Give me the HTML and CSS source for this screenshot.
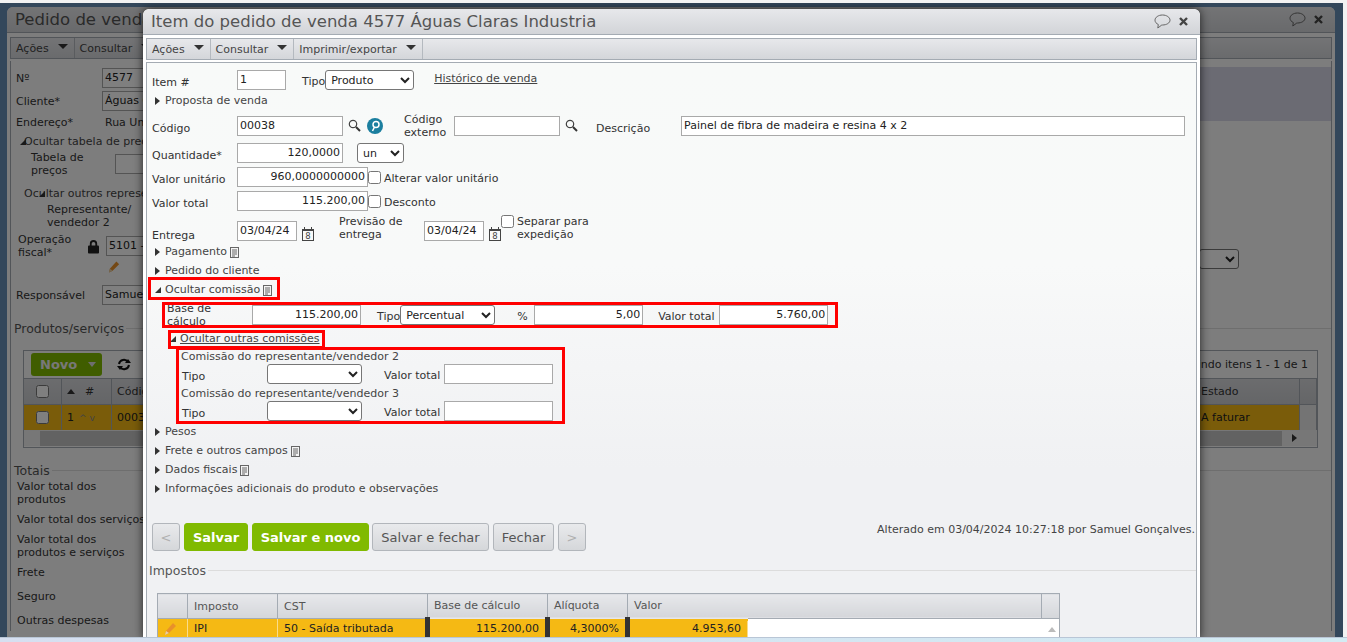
FILE: index.html
```html
<!DOCTYPE html>
<html lang="pt-BR">
<head>
  <meta charset="UTF-8">
  <title>Item do pedido de venda</title>
  <link rel="stylesheet" href="styles.css">
</head>
<body>
  <svg class="sprite" width="0" height="0">
    <symbol id="i-search" viewBox="0 0 13 13"><circle cx="5" cy="5" r="3.7" fill="none" stroke="#444" stroke-width="1.2"/><path d="M8 8l4 4" stroke="#333" stroke-width="2"/></symbol>
    <symbol id="i-doc" viewBox="0 0 9 11"><rect x=".5" y=".5" width="8" height="10" fill="#f4f4f4" stroke="#666"/><path d="M2 3h5M2 5h5M2 7h5M2 9h3" stroke="#666"/></symbol>
    <symbol id="i-cal" viewBox="0 0 12 14"><rect x=".5" y="2.5" width="11" height="11" fill="none" stroke="#444"/><path d="M2.5 0v3M9.5 0v3M.5 3.5h11" stroke="#444"/><text x="6" y="12" font-size="8.5" font-family="DejaVu Sans" text-anchor="middle" fill="#444">8</text></symbol>
    <symbol id="i-bubble" viewBox="0 0 17 15"><path d="M8.5 1C4.4 1 1 3.3 1 6.2c0 1.8 1.3 3.4 3.3 4.3L3.8 14l4-3h.7c4.1 0 7.5-2.1 7.5-4.8C16 3.3 12.6 1 8.5 1z" fill="none" stroke="#666"/></symbol>
    <symbol id="i-x" viewBox="0 0 9 9"><path d="M1 1l7 7M8 1l-7 7" stroke="#444" stroke-width="2.4"/></symbol>
    <symbol id="i-pencil" viewBox="0 0 14 14"><path d="M1 13l1-4 7-8 3 3-7 7z" fill="#e8912a"/><path d="M1 13l1-4 3 2z" fill="#e8d0a8"/></symbol>
    <symbol id="i-lock" viewBox="0 0 12 15"><path d="M3 7V4.500a3 3 0 0 1 6 0V7" fill="none" stroke="#222" stroke-width="2"/><rect x="0" y="6.500" width="12" height="8.500" rx="1" fill="#222"/></symbol>
    <symbol id="i-refresh" viewBox="0 0 14 13"><path d="M2 6a5 5 0 0 1 9-2M12 7a5 5 0 0 1-9 2" fill="none" stroke="#111" stroke-width="2"/><path d="M8 5h6l-3-4zM6 8H0l3 4z" fill="#111"/></symbol>
  </svg>

  <div class="desk">
    <div class="back">
      <div class="win-head">
        <span class="win-title">Pedido de venda</span>
        <svg class="bubble"><use href="#i-bubble"/></svg>
        <svg class="close"><use href="#i-x"/></svg>
      </div>
      <div class="toolbar back-toolbar">
        <span class="tool">Ações <i class="caret"></i></span>
        <span class="tool">Consultar <i class="caret"></i></span>
      </div>
      <div class="back-panel">
        <div class="back-top">
          <div class="back-form">
            <div class="brow brow-no"><span class="blbl">Nº</span><span class="binput">4577</span></div>
            <div class="brow brow-cli"><span class="blbl">Cliente*</span><span class="binput">Águas Claras Industria</span></div>
            <div class="brow brow-end"><span class="blbl">Endereço*</span><span class="btext">Rua Um</span></div>
            <div class="toggle open back-t1">Ocultar tabela de preços</div>
            <div class="brow brow-tab"><span class="blbl blbl-tab">Tabela de<br>preços</span><span class="binput empty"></span></div>
            <div class="toggle open back-t2">Ocultar outros representantes</div>
            <div class="brow brow-rep"><span class="blbl-rep">Representante/<br>vendedor 2</span></div>
            <div class="brow brow-op">
              <span class="blbl-op">Operação<br>fiscal*</span>
              <svg class="lock"><use href="#i-lock"/></svg>
              <span class="binput binput-op">5101 - Venda</span>
            </div>
            <svg class="back-pencil"><use href="#i-pencil"/></svg>
            <div class="brow brow-resp"><span class="blbl">Responsável</span><span class="binput">Samuel Gonçalves</span></div>
          </div>
          <div class="back-side">
            <div class="band"></div>
            <select class="side-select"><option></option></select>
          </div>
        </div>

        <div class="legend back-legend">Produtos/serviços</div>
        <div class="grid">
          <div class="grid-tools">
            <span class="novo">Novo<i class="novo-drop"></i></span>
            <svg class="refresh"><use href="#i-refresh"/></svg>
            <span class="showing">Exibindo itens 1 - 1 de 1</span>
          </div>
          <div class="grid-head">
            <span class="gcell"><input type="checkbox"></span>
            <span class="gcell"><i class="up"></i>#</span>
            <span class="gcell">Código</span>
            <span class="gcell">Estado</span>
            <span class="gcell"></span>
          </div>
          <div class="grid-row">
            <span class="gcell"><input type="checkbox"></span>
            <span class="gcell">1 <small>^ v</small></span>
            <span class="gcell">00038</span>
            <span class="gcell">A faturar</span>
            <span class="gcell gscroll"></span>
          </div>
          <div class="grid-foot"><span class="thumb"></span><i class="right"></i></div>
        </div>

        <div class="legend back-legend totals">Totais</div>
        <div class="tot tot-2">Valor total dos<br>produtos</div>
        <div class="tot tot-1">Valor total dos serviços</div>
        <div class="tot tot-2">Valor total dos<br>produtos e serviços</div>
        <div class="tot tot-1">Frete</div>
        <div class="tot tot-1">Seguro</div>
        <div class="tot tot-1">Outras despesas</div>
      </div>
    </div>

    <div class="overlay"></div>

    <div class="modal">
      <div class="win-head modal-head">
        <span class="win-title">Item do pedido de venda 4577 Águas Claras Industria</span>
        <svg class="bubble"><use href="#i-bubble"/></svg>
        <svg class="close"><use href="#i-x"/></svg>
      </div>
      <div class="toolbar">
        <span class="tool">Ações <i class="caret"></i></span>
        <span class="tool">Consultar <i class="caret"></i></span>
        <span class="tool">Imprimir/exportar <i class="caret"></i></span>
      </div>

      <div class="panel">
        <div class="row">
          <label class="lbl">Item #</label>
          <input class="w49" value="1">
          <label class="lbl-inline ml16">Tipo</label>
          <select class="w89"><option>Produto</option></select>
          <a class="link ml20">Histórico de venda</a>
        </div>
        <div class="toggle t-proposta">Proposta de venda</div>

        <div class="row row-codigo">
          <label class="lbl">Código</label>
          <input class="w106" value="00038">
          <svg class="search ml5"><use href="#i-search"/></svg>
          <span class="lookup"><svg viewBox="0 0 16 16"><circle cx="9" cy="6.500" r="3" fill="none" stroke="#fff" stroke-width="1.500"/><path d="M7.500 9l-2 4" stroke="#fff" stroke-width="1.500"/></svg></span>
          <label class="two-line w50 ml21">Código<br>externo</label>
          <input class="w106" value="">
          <svg class="search ml5"><use href="#i-search"/></svg>
          <label class="lbl-desc ml18">Descrição</label>
          <input class="w504" value="Painel de fibra de madeira e resina 4 x 2">
        </div>

        <div class="stack">
          <div class="row">
            <label class="lbl">Quantidade*</label>
            <input class="w106 num" value="120,0000">
            <select class="w47 ml14"><option>un</option></select>
          </div>
          <div class="row">
            <label class="lbl">Valor unitário</label>
            <input class="w131 num" value="960,0000000000">
            <input type="checkbox" class="ml23">
            <label class="check-label">Alterar valor unitário</label>
          </div>
          <div class="row">
            <label class="lbl">Valor total</label>
            <input class="w131 num ro" value="115.200,00" readonly>
            <input type="checkbox" class="ml23">
            <label class="check-label">Desconto</label>
          </div>
        </div>

        <div class="row row-entrega">
          <label class="lbl lbl-entrega">Entrega</label>
          <input class="w60 date" value="03/04/24">
          <svg class="cal ml5"><use href="#i-cal"/></svg>
          <label class="two-line w85 ml25">Previsão de<br>entrega</label>
          <input class="w60 date" value="03/04/24">
          <svg class="cal ml5"><use href="#i-cal"/></svg>
          <input type="checkbox" class="ml26 check-top">
          <label class="two-line check-label">Separar para<br>expedição</label>
        </div>

        <div class="toggle">Pagamento <svg class="doc"><use href="#i-doc"/></svg></div>
        <div class="toggle">Pedido do cliente</div>
        <div class="toggle open">Ocultar comissão <svg class="doc"><use href="#i-doc"/></svg></div>

        <div class="row row-base">
          <label class="two-line w85">Base de<br>cálculo</label>
          <input class="w109 num ro" value="115.200,00" readonly>
          <label class="lbl-inline ml16">Tipo</label>
          <select class="w95"><option>Percentual</option></select>
          <label class="lbl-inline w17 ml22">%</label>
          <input class="w109 num" value="5,00">
          <label class="lbl-inline w61 ml15">Valor total</label>
          <input class="w109 num" value="5.760,00">
        </div>

        <div class="toggle open sub"><a class="link">Ocultar outras comissões</a></div>

        <div class="rep-title rep-first">Comissão do representante/vendedor 2</div>
        <div class="row row-rep">
          <label class="lbl">Tipo</label>
          <select class="w95"><option></option></select>
          <label class="lbl-inline w60 ml22">Valor total</label>
          <input class="w109">
        </div>
        <div class="rep-title">Comissão do representante/vendedor 3</div>
        <div class="row row-rep">
          <label class="lbl">Tipo</label>
          <select class="w95"><option></option></select>
          <label class="lbl-inline w60 ml22">Valor total</label>
          <input class="w109">
        </div>

        <div class="toggle t-pesos">Pesos</div>
        <div class="toggle">Frete e outros campos <svg class="doc"><use href="#i-doc"/></svg></div>
        <div class="toggle">Dados fiscais <svg class="doc"><use href="#i-doc"/></svg></div>
        <div class="toggle">Informações adicionais do produto e observações</div>

        <div class="actions">
          <button class="btn nav" disabled>&lt;</button>
          <button class="btn green save">Salvar</button>
          <button class="btn green save-new">Salvar e novo</button>
          <button class="btn save-close">Salvar e fechar</button>
          <button class="btn close-btn">Fechar</button>
          <button class="btn nav" disabled>&gt;</button>
          <span class="changed">Alterado em 03/04/2024 10:27:18 por Samuel Gonçalves.</span>
        </div>

        <div class="legend">Impostos</div>
        <table class="taxes">
          <colgroup>
            <col class="c-edit"><col class="c-imp"><col class="c-cst"><col class="c-base"><col class="c-aliq"><col class="c-val"><col class="c-rest"><col class="c-scroll">
          </colgroup>
          <thead>
            <tr><th></th><th>Imposto</th><th>CST</th><th>Base de cálculo</th><th>Alíquota</th><th colspan="2">Valor</th><th></th></tr>
          </thead>
          <tbody>
            <tr class="sel">
              <td><svg class="edit"><use href="#i-pencil"/></svg></td>
              <td>IPI</td>
              <td>50 - Saída tributada</td>
              <td class="right">115.200,00</td>
              <td class="right">4,3000%</td>
              <td class="right">4.953,60</td>
              <td class="blank"></td>
              <td class="blank"><i class="up up-grey"></i></td>
            </tr>
          </tbody>
        </table>
      </div>

      <span class="mark mark-1"></span>
      <span class="mark mark-2"></span>
      <span class="mark mark-3"></span>
      <span class="mark mark-4"></span>
    </div>
  </div>
  <div class="strip"></div>
</body>
</html>
```
FILE: styles.css
```css
* {
  box-sizing: border-box;
}

html, body {
  margin: 0;
  height: 642px;
  overflow: hidden;
}

body {
  background: #f2f2f2;
  font-family: "DejaVu Sans", Verdana, sans-serif;
  font-size: 11px;
  color: #333;
  padding-top: 3px;
  border-top: 0;
}

.sprite {
  display: block;
  position: absolute;
}

.desk {
  position: relative;
  width: 1343px;
  height: 634px;
  overflow: hidden;
  background: #668eb6;
  padding: 4px 8px 0 7px;
}

.overlay {
  position: absolute;
  inset: 0;
  background: rgba(0, 0, 0, 0.5);
}

.strip {
  height: 5px;
  background: linear-gradient(90deg, #d6dff0, #d3ebf3);
  border-top: 1px solid #b9c6d6;
}

/* window chrome */
.win-head {
  display: flex;
  align-items: center;
  height: 26px;
  padding: 0 12px 0 8px;
  background: linear-gradient(#e7e8eb, #d2d4d8);
  border-bottom: 1px solid #a4abb3;
  border-radius: 6px 6px 0 0;
}

.win-title {
  flex: 1;
  font-size: 16.500px;
  color: #555;
  white-space: nowrap;
}

.bubble {
  width: 17px;
  height: 15px;
  margin-right: 8px;
}

.close {
  width: 9px;
  height: 9px;
}

.toolbar {
  display: flex;
  height: 22px;
  margin: 3px 3px 2px;
  background: linear-gradient(#e7e8eb, #d4d6da);
  border: 1px solid #a4abb3;
}

.tool {
  display: flex;
  align-items: center;
  gap: 6px;
  padding: 0 5px 0 5px;
  border-right: 1px solid #b4b9bf;
  color: #444;
  font-size: 11px;
}

.caret {
  width: 0;
  height: 0;
  margin: 0 1px 3px 3px;
  border-left: 5px solid transparent;
  border-right: 5px solid transparent;
  border-top: 5px solid #333;
}

/* background window */
.back {
  height: 630px;
  background: #fbfbfb;
  border-radius: 6px 6px 0 0;
}

.back .win-title {
  font-size: 16.500px;
}

.back-toolbar {
  margin: 4px 3px 2px;
}

.back-panel {
  margin: 0 3px;
  padding: 6px 0 0;
  border-left: 1px solid #a4abb3;
  border-right: 1px solid #a4abb3;
  height: 570px;
}

.back-top {
  display: flex;
  justify-content: space-between;
  height: 254px;
}

.back-form {
  width: 400px;
}

.brow {
  display: flex;
  align-items: center;
  padding-left: 5px;
  white-space: nowrap;
}

.blbl {
  width: 86px;
}

.binput {
  display: block;
  width: 300px;
  height: 20px;
  padding: 2px;
  background: #fff;
  border: 1px solid #a9a9a9;
  color: #222;
}

.binput.empty {
  margin-left: -1px;
}

.btext {
  padding-left: 3px;
}

.brow-no { height: 22px; margin-top: 0; }
.brow-cli { height: 20px; margin-top: 2px; }
.brow-end { height: 20px; margin-top: 1px; }

.back-t1 {
  margin-top: 0;
  padding-left: 19px;
}

.back-t2 {
  padding-left: 34px;
  margin-top: 7px;
}

.brow-tab {
  height: 26px;
  margin-top: 0;
  padding-left: 20px;
}

.blbl-tab {
  width: 86px;
  line-height: 13px;
}

.blbl-rep {
  padding-left: 31px;
  line-height: 13px;
}

.brow-rep {
  height: 26px;
  margin-top: 0;
}

.brow-op {
  height: 26px;
  margin-top: 4px;
  padding-left: 7px;
}

.blbl-op {
  width: 70px;
  line-height: 13px;
}

.lock {
  width: 11px;
  height: 15px;
  margin-right: 7px;
}

.back-pencil {
  display: block;
  width: 13px;
  height: 14px;
  margin: 1px 0 0 97px;
}

.brow-resp {
  height: 18px;
  margin-top: 12px;
}

.back-side {
  width: 132px;
  display: flex;
  flex-direction: column;
}

.band {
  height: 54px;
  background: #d6d6e6;
}

.side-select {
  align-self: flex-start;
  width: 40px;
  margin-top: 128px;
}

.legend {
  display: flex;
  align-items: center;
  gap: 2px;
  height: 14px;
  margin: 12px 0 0 -3px;
  font-size: 12.500px;
  color: #555;
  white-space: nowrap;
}

.legend::after {
  content: "";
  flex: 1;
  height: 1px;
  background: #dcdcdc;
}

.back-legend {
  margin: 0 0 0 3px;
}

.grid {
  margin: 15px 13px 0 12px;
  border: 1px solid #a4abb3;
  height: 98px;
}

.grid-tools {
  display: flex;
  align-items: center;
  height: 27px;
  padding: 0 7px;
}

.novo {
  display: flex;
  align-items: center;
  justify-content: space-between;
  width: 71px;
  height: 23px;
  padding-left: 9px;
  background: #80ba00;
  border-radius: 3px;
  color: #f0f0f0;
  font-weight: bold;
  font-size: 13px;
}

.novo-drop {
  width: 0;
  height: 0;
  margin-right: 6px;
  border-left: 4px solid transparent;
  border-right: 4px solid transparent;
  border-top: 5px solid #ddd;
}

.refresh {
  width: 14px;
  height: 13px;
  margin-left: 15px;
}

.showing {
  margin-left: auto;
  padding-right: 2px;
}

.grid-head,
.grid-row {
  display: grid;
  grid-template-columns: 38px 50px 1fr 104px 17px;
  align-items: stretch;
}

.grid-head {
  height: 26px;
  background: linear-gradient(#d8d9dc, #c9cbcf);
  border-top: 1px solid #a4abb3;
}

.grid-row {
  height: 26px;
  background: #f5b914;
  border-top: 1px solid #a4abb3;
  color: #222;
}

.gcell {
  display: flex;
  align-items: center;
  gap: 5px;
  padding-left: 5px;
  border-right: 1px solid #a4abb3;
  white-space: nowrap;
  overflow: hidden;
}

.gcell small {
  color: #888;
}

.gscroll {
  background: #e8e8e8;
}

.grid input[type="checkbox"] {
  margin: 0 0 0 7px;
}

.grid-foot {
  display: flex;
  align-items: center;
  height: 16px;
  padding-left: 16px;
  background: #efefef;
}

.thumb {
  flex: 1;
  height: 15px;
  background: #c4c4c4;
}

.right {
  width: 0;
  height: 0;
  margin: 0 20px 0 10px;
  border-top: 4px solid transparent;
  border-bottom: 4px solid transparent;
  border-left: 5px solid #333;
}

.totals {
  margin-top: 15px;
}

.tot {
  padding-left: 6px;
  line-height: 13px;
  white-space: nowrap;
}

.tot-2 { margin-top: 3px; height: 26px; }
.tot-1 { margin-top: 7px; height: 17px; }

/* modal */
.modal {
  position: absolute;
  left: 143px;
  top: 6px;
  width: 1057px;
  height: 630px;
  overflow: hidden;
  background: #fff;
  border-radius: 6px 6px 0 0;
  box-shadow: 0 0 10px rgba(0, 0, 0, 0.7);
}

.panel {
  height: 580px;
  margin: 0 3px;
  padding: 7px 0 0 5px;
  background: linear-gradient(#f8faf9, #f8f9f9 35%, #f0f1f3 70%);
  border: 1px solid #a4abb3;
  border-bottom: 0;
  overflow: hidden;
}

.row {
  display: flex;
  align-items: center;
  height: 20px;
  white-space: nowrap;
}

.lbl {
  width: 85px;
  padding-top: 4px;
}

.lbl-inline {
  padding-top: 3px;
}

.lbl-desc {
  width: 85px;
  padding-top: 4px;
}

.two-line {
  line-height: 13px;
}

.check-label {
  margin-left: 3px;
  padding-top: 2px;
}

.link {
  color: #444;
  text-decoration: underline;
}

.row > .link {
  margin-bottom: 3px;
}

input:not([type="checkbox"]),
select {
  height: 20px;
  padding: 0 2px 2px;
  background: #fff;
  border: 1px solid #a9a9a9;
  border-radius: 0;
  font: 11px "DejaVu Sans", Verdana, sans-serif;
  color: #222;
  outline: none;
}

select {
  padding: 0 0 0 1px;
  border-color: #767676;
  border-radius: 3px;
}

input[type="checkbox"] {
  width: 13px;
  height: 13px;
  margin: 0;
  flex: none;
}

.num {
  text-align: right;
}

.ro {
  color: #777;
}

.w17 { width: 17px; }
.w47 { width: 47px; }
.w49 { width: 49px; }
.w50 { width: 50px; }
.w60 { width: 60px; }
.w61 { width: 61px; }
.w85 { width: 85px; }
.w89 { width: 89px; }
.w95 { width: 95px; }
.w106 { width: 106px; }
.w109 { width: 109px; }
.w131 { width: 131px; }
.w504 { width: 504px; }

.ml5 { margin-left: 5px; }
.ml14 { margin-left: 14px; }
.ml15 { margin-left: 15px; }
.ml16 { margin-left: 16px; }
.ml18 { margin-left: 18px; }
.ml20 { margin-left: 20px; }
.ml21 { margin-left: 21px; }
.ml22 { margin-left: 22px; }
.ml23 { margin-left: 23px; }
.ml25 { margin-left: 25px; }
.ml26 { margin-left: 26px; }

.ml14, .ml16 { flex: none; }

.search {
  width: 13px;
  height: 13px;
  flex: none;
  margin-bottom: 2px;
}

.lookup {
  flex: none;
  width: 16px;
  height: 16px;
  margin-left: 6px;
  border-radius: 50%;
  background: #1b7f9f;
}

.lookup svg {
  display: block;
}

.cal {
  width: 12px;
  height: 14px;
  flex: none;
}

.doc {
  width: 9px;
  height: 11px;
  margin: 2px 0 0 3px;
}

.toggle {
  position: relative;
  display: flex;
  align-items: center;
  height: 19px;
  padding-left: 13px;
  color: #444;
  white-space: nowrap;
}

.toggle::before {
  content: "";
  position: absolute;
  left: 3px;
  top: 6px;
  border-top: 4px solid transparent;
  border-bottom: 4px solid transparent;
  border-left: 5px solid #333;
}

.toggle.open::before {
  top: 7px;
  border-top: 0;
  border-left: 6px solid transparent;
  border-bottom: 6px solid #333;
}

.back-t1.open::before { left: 9px; }
.back-t2.open::before { left: 28px; }

.t-proposta { margin-top: 1px; }
.row-codigo { margin-top: 6px; }

.stack {
  display: flex;
  flex-direction: column;
  gap: 4px;
  margin-top: 7px;
}

.row-entrega {
  align-items: flex-end;
  height: 27px;
  margin-top: 4px;
}

.row-entrega .date,
.row-entrega .cal {
  margin-bottom: 1px;
}

.lbl-entrega {
  padding-bottom: 0;
}

.row-entrega .two-line {
  align-self: flex-start;
  padding-top: 0;
}

.check-top {
  align-self: flex-start;
  margin-top: 4px;
}

.row-base {
  margin: 6px 0 0 15px;
}

.sub {
  margin: 4px 0 0 15px;
  padding-left: 13px;
}

.rep-title {
  height: 13px;
  margin: 3px 0 0 29px;
  line-height: 13px;
  color: #444;
}

.rep-first {
  margin-top: 2px;
}

.row-rep {
  margin: 1px 0 0 30px;
}

.t-pesos { margin-top: 1px; }

.actions {
  display: flex;
  gap: 4px;
  height: 28px;
  margin-top: 25px;
}

.btn {
  height: 28px;
  padding: 0;
  background: linear-gradient(#e9eaec, #d5d7da);
  border: 1px solid #b2b6bb;
  border-radius: 3px;
  font: 13px "DejaVu Sans", Verdana, sans-serif;
  color: #555;
}

.btn.nav {
  width: 28px;
  color: #b0b0b0;
}

.btn.green {
  background: #80ba00;
  border-color: #80ba00;
  color: #fff;
  font-weight: bold;
}

.save { width: 64px; }
.save-new { width: 117px; }
.save-close { width: 117px; margin-left: -1px; }
.close-btn { width: 61px; }

.changed {
  margin-left: auto;
  padding-right: 1px;
  line-height: 14px;
  color: #444;
}

.taxes {
  width: 902px;
  margin: 16px 0 0 5px;
  border-collapse: collapse;
  table-layout: fixed;
  border: 1px solid #a4abb3;
}

.c-edit { width: 30px; }
.c-imp { width: 90px; }
.c-cst { width: 150px; }
.c-base { width: 120px; }
.c-aliq { width: 80px; }
.c-val { width: 120px; }
.c-rest { width: 294px; }
.c-scroll { width: 18px; }

.taxes th {
  height: 25px;
  padding: 0 6px;
  background: linear-gradient(#e7e8eb, #d4d6da);
  border: 1px solid #a4abb3;
  font-weight: normal;
  text-align: left;
  color: #555;
}

.taxes td {
  height: 20px;
  padding: 0 6px;
  background: #f5b914;
  border-right: 1px solid #f9dc8c;
  color: #222;
  white-space: nowrap;
}

.taxes td.right {
  text-align: right;
}

.taxes td.blank {
  background: #fff;
  border: 0;
}

.edit {
  width: 14px;
  height: 14px;
  display: block;
}

.up {
  display: inline-block;
  width: 0;
  height: 0;
  margin-right: 5px;
  border-left: 4px solid transparent;
  border-right: 4px solid transparent;
  border-bottom: 5px solid #333;
}

.up-grey {
  margin: 0;
  border-bottom-color: #bbb;
}

/* red annotations drawn on top of the form */
.mark {
  position: absolute;
  border: 3px solid #f00;
}

.mark-1 { left: 5px; top: 268px; width: 132px; height: 23px; }
.mark-2 { left: 19px; top: 293px; width: 676px; height: 26px; }
.mark-3 { left: 25px; top: 321px; width: 157px; height: 19px; }
.mark-4 { left: 33px; top: 338px; width: 389px; height: 77px; }
```
